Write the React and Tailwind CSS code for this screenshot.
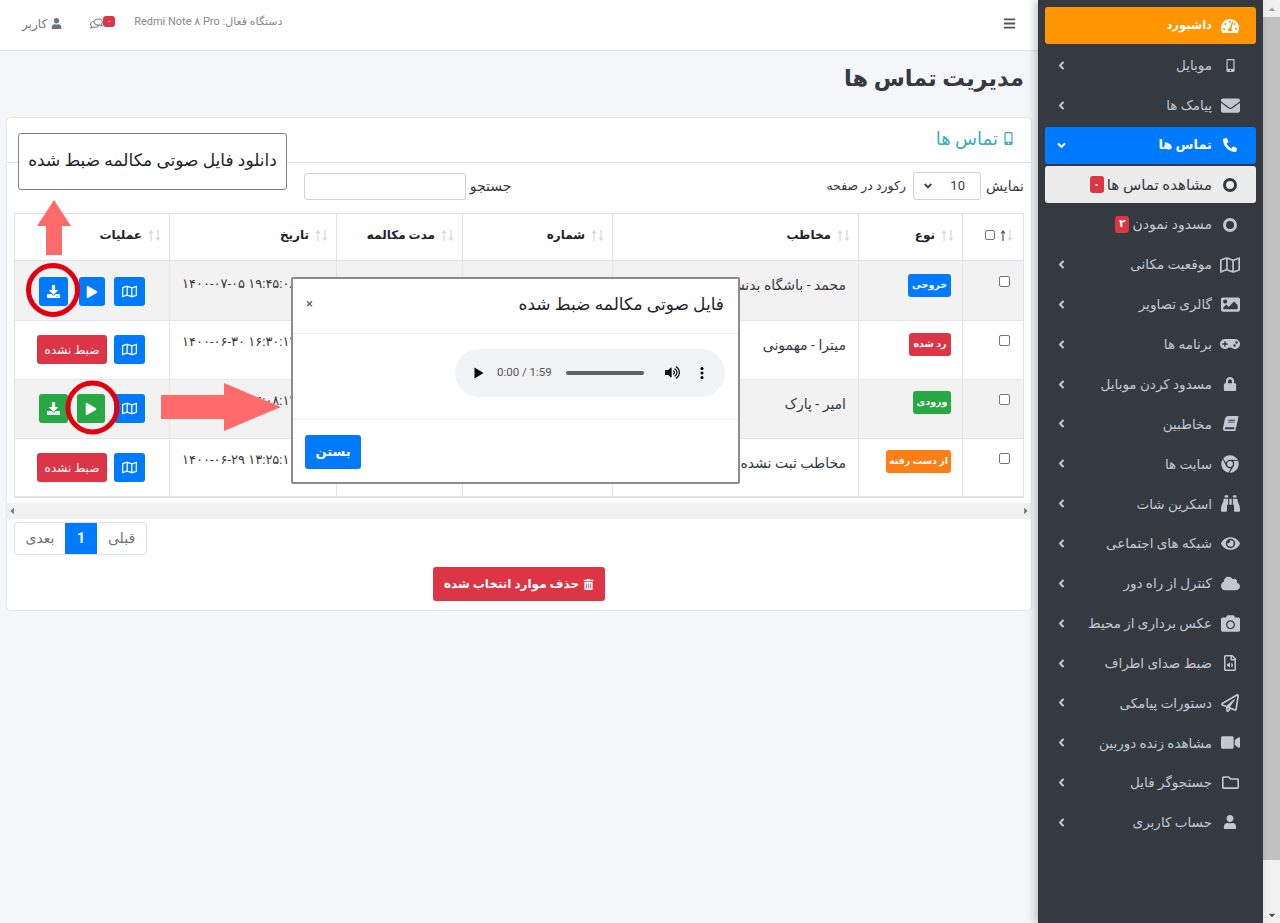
import React from 'react';
import {
  FaTachometerAlt, FaMobileAlt, FaEnvelope, FaPhone, FaRegMap, FaImage, FaGamepad, FaLock, FaBook,
  FaChrome, FaBinoculars, FaEye, FaCloud, FaCamera, FaRegFileAudio, FaRegPaperPlane, FaVideo, FaRegFolder, FaUser,
  FaAngleLeft, FaAngleDown, FaBars, FaRegComments, FaTrashAlt, FaDownload, FaPlay, FaVolumeUp, FaCaretUp, FaCaretDown, FaCaretLeft, FaCaretRight,
} from 'react-icons/fa';

const menu = [
  { t: 'موبایل', I: FaMobileAlt, s: 13 },
  { t: 'پیامک ها', I: FaEnvelope, s: 19 },
  { t: 'تماس ها', I: FaPhone, s: 14, open: true, flip: true },
  { t: 'مشاهده تماس ها', sub: 'active', badge: '۰' },
  { t: 'مسدود نمودن', sub: 'plain', badge: '۲' },
  { t: 'موقعیت مکانی', I: FaRegMap, s: 20 },
  { t: 'گالری تصاویر', I: FaImage, s: 19 },
  { t: 'برنامه ها', I: FaGamepad, s: 20 },
  { t: 'مسدود کردن موبایل', I: FaLock, s: 14 },
  { t: 'مخاطبین', I: FaBook, s: 15, skew: true },
  { t: 'سایت ها', I: FaChrome, s: 18 },
  { t: 'اسکرین شات', I: FaBinoculars, s: 19 },
  { t: 'شبکه های اجتماعی', I: FaEye, s: 19 },
  { t: 'کنترل از راه دور', I: FaCloud, s: 19 },
  { t: 'عکس برداری از محیط', I: FaCamera, s: 19 },
  { t: 'ضبط صدای اطراف', I: FaRegFileAudio, s: 16 },
  { t: 'دستورات پیامکی', I: FaRegPaperPlane, s: 18 },
  { t: 'مشاهده زنده دوربین', I: FaVideo, s: 19 },
  { t: 'جستجوگر فایل', I: FaRegFolder, s: 17 },
  { t: 'حساب کاربری', I: FaUser, s: 14 },
];

function Sidebar() {
  return (
    <aside className="relative z-10 w-[225px] shrink-0 h-full bg-[#343a40] text-[#c2c7d0] px-[7px] pt-[7px] shadow-[-3px_0_8px_rgba(0,0,0,0.22)]">
      <div className="flex h-[37px] items-center rounded-[3px] bg-[#ff9500] pr-4 text-white font-bold text-[11.5px]">
        <span className="flex w-5 justify-center"><FaTachometerAlt size={18} /></span>
        <span className="mr-2">داشبورد</span>
      </div>
      {menu.map((m) => {
        const cls = m.open
          ? 'bg-[#007bff] text-white font-bold text-[13px]'
          : m.sub === 'active'
          ? 'bg-[#ececec] text-[#343a40] text-[15px]'
          : m.sub
          ? 'text-[14px]'
          : 'text-[13.5px]';
        return (
          <div key={m.t} className={`mt-[2.85px] flex h-[37px] items-center rounded-[3px] pr-4 pl-[10px] ${cls}`}>
            <span className="flex w-5 shrink-0 justify-center">
              {m.I ? (
                <m.I size={m.s} className={m.flip ? '-scale-x-100' : m.skew ? '-skew-x-12' : ''} />
              ) : (
                <span className="block h-[14px] w-[14px] rounded-full border-[3px] border-current" />
              )}
            </span>
            <span className="mr-2 whitespace-nowrap">{m.t}</span>
            {m.badge && (
              <span className="mr-[3px] flex h-[17px] w-[14px] items-center justify-center rounded-[3px] bg-[#dc3545] text-[11px] font-bold text-white">{m.badge}</span>
            )}
            {!m.sub && (
              <span className="mr-auto">
                {m.open ? <FaAngleDown size={13} /> : <FaAngleLeft size={13} />}
              </span>
            )}
          </div>
        );
      })}
    </aside>
  );
}

function PageScrollbar() {
  return (
    <div className="flex h-full w-[17px] shrink-0 flex-col items-center bg-[#f1f1f1] text-[#6e6e6e]">
      <div className="flex h-[17px] items-center"><FaCaretUp size={10} className="text-[#a0a0a0]" /></div>
      <div className="h-[843px] w-full bg-[#c1c1c1]" />
      <div className="mt-auto flex h-[17px] items-center"><FaCaretDown size={10} className="text-[#505050]" /></div>
    </div>
  );
}

function Sort({ active }) {
  const up = active ? '#555' : '#d5d8db';
  return (
    <svg width="13" height="13" viewBox="0 0 13 13" className="shrink-0" fill="none" strokeWidth="1.2">
      <path d="M3 12 V2 M1 4.5 L3 2 L5 4.5" stroke={up} />
      <path d="M10 1 V11 M8 8.5 L10 11 L12 8.5" stroke="#d5d8db" />
    </svg>
  );
}

function Th({ w, children }) {
  return (
    <th className={`${w} h-[47px] border-b border-l border-[#dee2e6] pr-[8px] pb-[4px] font-bold last:border-l-0`}>
      <div className="flex items-center gap-[6px] text-[12px] text-[#212529]">
        <Sort />
        {children}
      </div>
    </th>
  );
}

const Blue = 'bg-[#007bff]';
const Green = 'bg-[#28a745]';

function IconBtn({ w, color, children }) {
  return <span className={`flex h-[29px] ${w} items-center justify-center rounded-[3px] text-white ${color}`}>{children}</span>;
}

const rows = [
  {
    badge: 'خروجی', bc: 'bg-[#007bff]', bw: 'w-[43px]', name: 'محمد  -  باشگاه بدنسازی', date: '۱۴۰۰-۰۷-۰۵ ۱۹:۴۵:۰۸', color: Blue, rec: true, pw: 'w-[26px]', dlGap: 'mr-[11px]',
    h: 'h-[60px]', pBox: 'pt-[15px]', pBadge: 'pt-[13px]', pName: 'pt-[14px]', pDate: 'pt-[13px]', pOps: 'pt-[16px]',
  },
  {
    badge: 'رد شده', bc: 'bg-[#dc3545]', bw: 'w-[42px]', name: 'میترا - مهمونی', date: '۱۴۰۰-۰۶-۳۰ ۱۶:۳۰:۱۲', rec: false,
    h: 'h-[59px]', pBox: 'pt-[14px]', pBadge: 'pt-[12px]', pName: 'pt-[14px]', pDate: 'pt-[11px]', pOps: 'pt-[14px]',
  },
  {
    badge: 'ورودی', bc: 'bg-[#28a745]', bw: 'w-[38px]', name: 'امیر - پارک', date: '۱۴۰۰-۰۶-۳۰ ۱۴:۰۸:۱۲', color: Green, rec: true, pw: 'w-[28px]', dlGap: 'mr-[11px]',
    h: 'h-[59px]', pBox: 'pt-[14px]', pBadge: 'pt-[11px]', pName: 'pt-[14px]', pDate: 'pt-[11px]', pOps: 'pt-[14px]',
  },
  {
    badge: 'از دست رفته', bc: 'bg-[#fd7e14]', bw: 'w-[65px]', name: 'مخاطب ثبت نشده', date: '۱۴۰۰-۰۶-۲۹ ۱۳:۲۵:۱۰', rec: false,
    h: 'h-[58px]', pBox: 'pt-[14px]', pBadge: 'pt-[11px]', pName: 'pt-[14px]', pDate: 'pt-[11px]', pOps: 'pt-[14px]',
  },
];
rows[2].dlGap = 'mr-[9px]';

function Row({ r, i }) {
  const bg = i % 2 === 0 ? 'bg-[#f2f2f2]' : 'bg-white';
  const td = `${r.h} border-l border-b border-[#e3e6e9] align-top ${bg}`;
  return (
    <tr>
      <td className={`${td} pr-[13px] ${r.pBox}`}>
        <span className="block h-[11px] w-[11px] rounded-[2px] border border-[#767676] bg-white" />
      </td>
      <td className={`${td} pr-[11px] ${r.pBadge}`}>
        <span className={`flex h-[23px] ${r.bw} items-center justify-center rounded-[3px] text-[9.5px] font-bold text-white ${r.bc}`}>{r.badge}</span>
      </td>
      <td className={`${td} pr-[12px] ${r.pName} text-[14px] whitespace-nowrap overflow-hidden text-[#343a40]`}>{r.name}</td>
      <td className={td} />
      <td className={td} />
      <td className={`${td} pl-[12px] ${r.pDate} text-[13px] text-[#343a40]`}>
        <div dir="ltr" className="whitespace-nowrap text-left overflow-hidden">{r.date}</div>
      </td>
      <td className={`${td} border-l-0 pr-6 ${r.pOps}`}>
        <div className="flex">
          <IconBtn w="w-[31px]" color={Blue}><FaRegMap size={15} /></IconBtn>
          {r.rec ? (
            <>
              <span className="mr-[9px]"><IconBtn w={r.pw} color={r.color}><FaPlay size={12} /></IconBtn></span>
              <span className={r.dlGap}><IconBtn w="w-[29px]" color={r.color}><FaDownload size={13} /></IconBtn></span>
            </>
          ) : (
            <span className="mr-[7px] flex h-[29px] w-[70px] items-center justify-center rounded-[3px] bg-[#dc3545] text-[12px] text-white">ضبط نشده</span>
          )}
        </div>
      </td>
    </tr>
  );
}

function Card() {
  return (
    <section className="mx-[7px] mt-[22px] h-[492px] w-[1024px] rounded-[4px] bg-white shadow-[0_0_2px_rgba(0,0,0,0.2)]">
      <div className="flex h-[45px] items-center gap-1 border-b border-[#dee2e6] pr-[16px] pb-[4px] text-[18px] text-[#3aacbf]">
        <FaMobileAlt size={13} />
        <span>تماس ها</span>
      </div>
      <div className="flex h-[50px] items-start pt-[9px] text-[14px] text-[#343a40]">
        <div className="mr-[7px] flex h-[28px] items-center">
          <span>نمایش</span>
          <span className="mr-[5px] flex h-[28px] w-[68px] items-center justify-between rounded-[3px] border border-[#ced4da] bg-white pl-[8px] pr-[15px] text-[13px]">
            <span>10</span>
            <FaAngleDown size={12} />
          </span>
          <span className="mr-[7px] text-[12.5px]">رکورد در صفحه</span>
        </div>
        <div className="mr-[315px] flex h-[28px] items-center">
          <span>جستجو</span>
          <span className="mr-1 block h-[27px] w-[162px] rounded-[3px] border border-[#ced4da] bg-white" />
        </div>
      </div>
      <div className="mx-[7px] w-[1010px] border border-[#dee2e6]">
        <table className="w-[1008px] table-fixed border-separate border-spacing-0 text-right">
          <thead>
            <tr>
              <th className="w-[61px] h-[47px] border-b border-l border-[#dee2e6] pr-[10px] pb-[4px]">
                <div className="flex items-center gap-[5px]">
                  <Sort active />
                  <span className="block h-[10px] w-[10px] rounded-[2px] border border-[#767676] bg-white" />
                </div>
              </th>
              <Th w="w-[104px]">نوع</Th>
              <Th w="w-[246px]">مخاطب</Th>
              <Th w="w-[150px]">شماره</Th>
              <Th w="w-[126px]">مدت مکالمه</Th>
              <Th w="w-[167px]">تاریخ</Th>
              <Th w="w-[154px]">عملیات</Th>
            </tr>
          </thead>
          <tbody>
            {rows.map((r, i) => <Row key={i} r={r} i={i} />)}
          </tbody>
        </table>
      </div>
      <div className="mt-[5px] flex h-[16px] items-center justify-between bg-[#f1f1f1] text-[#777]">
        <FaCaretRight size={10} />
        <FaCaretLeft size={10} />
      </div>
      <div className="mt-[3px] flex justify-end pl-[7px]">
        <div className="flex h-[33px] overflow-hidden rounded-[4px] border border-[#dee2e6] text-[14px] text-[#6c757d]">
          <span className="flex w-[49px] items-center justify-center">قبلی</span>
          <span className="flex w-[32px] items-center justify-center bg-[#007bff] text-[14px] font-bold text-white">1</span>
          <span className="flex w-[50px] items-center justify-center">بعدی</span>
        </div>
      </div>
      <div className="mt-3 flex justify-center">
        <span className="flex h-[34px] w-[172px] items-center justify-center gap-1 rounded-[3px] bg-[#dc3545] text-[12px] font-bold text-white">
          <FaTrashAlt size={11} />
          <span>حذف موارد انتخاب شده</span>
        </span>
      </div>
    </section>
  );
}

function Player() {
  return (
    <div dir="ltr" className="flex h-[48px] w-[270px] items-center rounded-full bg-[#f1f3f4] pl-[19px] text-[#111]">
      <svg width="10" height="12" viewBox="0 0 10 12"><path d="M0.5 0.5 L9.5 6 L0.5 11.5 Z" fill="#000" /></svg>
      <span className="ml-[13px] w-[55px] whitespace-nowrap font-['Roboto',sans-serif] text-[11.5px] text-[#555]">0:00 / 1:59</span>
      <span className="ml-[14px] h-[4px] w-[78px] rounded bg-[#5f6163]" />
      <FaVolumeUp size={15} className="ml-[21px]" />
      <svg width="4" height="14" viewBox="0 0 4 14" className="ml-[20px]"><circle cx="2" cy="2.5" r="1.5" /><circle cx="2" cy="7" r="1.5" /><circle cx="2" cy="11.5" r="1.5" /></svg>
    </div>
  );
}

function Modal() {
  return (
    <div className="absolute left-[291px] top-[277px] z-20 h-[207px] w-[449px] rounded-[2px] border-2 border-[#8c8c8c] bg-white">
      <div className="flex h-[55px] items-center justify-between border-b border-[#e9ecef] pb-[3px] pl-[13px] pr-[14px]">
        <span className="text-[17px] text-[#212529]">فایل صوتی مکالمه ضبط شده</span>
        <span className="font-['Roboto',sans-serif] text-[13px] leading-none text-[#555] -mt-[3px]">×</span>
      </div>
      <div className="flex h-[86px] items-center border-b border-[#e9ecef] pb-[8px] pr-[13px]">
        <Player />
      </div>
      <div className="pl-[12px] pt-[15px]">
        <div className="flex justify-end">
          <span className="flex h-[34px] w-[56px] items-center justify-center rounded-[3px] bg-[#007bff] text-[13px] font-bold text-white">بستن</span>
        </div>
      </div>
    </div>
  );
}

function Annotations() {
  return (
    <>
      <div className="absolute left-[18px] top-[133px] z-20 flex h-[57px] w-[269px] items-center justify-center rounded-[3px] border border-[#808080] bg-white pb-[2px] text-[17px] text-[#212529]">
        دانلود فایل صوتی مکالمه ضبط شده
      </div>
      <svg className="absolute left-0 top-0 z-30 pointer-events-none" width="300" height="440" viewBox="0 0 300 440">
        <path d="M54 200 L71 226 L62 226 L62 255 L46 255 L46 226 L37 226 Z" fill="#ff6b6b" />
        <path d="M161 395 L224 395 L224 383 L281 407 L224 431 L224 419 L161 419 Z" fill="#ff6b6b" />
        <circle cx="53" cy="290" r="24.5" fill="none" stroke="#e2000f" strokeWidth="5" />
        <circle cx="92.5" cy="407.5" r="24.5" fill="none" stroke="#e2000f" strokeWidth="5" />
      </svg>
    </>
  );
}

export default function App() {
  return (
    <div dir="rtl" className="flex h-[923px] w-[1280px] overflow-hidden bg-[#f4f6f9] font-['Roboto','DejaVu_Sans',sans-serif] text-[#212529]">
      <PageScrollbar />
      <Sidebar />
      <main className="relative h-full w-[1038px] shrink-0">
        <header className="flex h-[51px] items-center border-b border-[#dee2e6] bg-white pb-[3px] pl-[22px] pr-[22px] text-[#6c757d]">
          <FaBars size={13} className="text-[#555]" />
          <div className="mr-auto flex items-center text-[11px]">
            <span className="-mt-[3px] whitespace-nowrap text-[#888]">دستگاه فعال: Redmi Note ۸ Pro</span>
            <span className="mr-[19px] flex h-[11px] w-[12px] -mt-[4px] items-center justify-center rounded-[3px] bg-[#dc3545] text-[8px] text-white">۰</span>
            <FaRegComments size={13} className="text-[#888] -scale-x-100" />
            <FaUser size={11} className="mr-[28px] text-[#6c757d]" />
            <span className="mr-1 text-[12px] text-[#777]">کاربر</span>
          </div>
        </header>
        <h1 className="mr-[14px] mt-[12px] h-[33px] text-[22.5px] font-bold leading-[30px] text-[#343a40]">مدیریت تماس ها</h1>
        <Card />
        <Modal />
        <Annotations />
      </main>
    </div>
  );
}
